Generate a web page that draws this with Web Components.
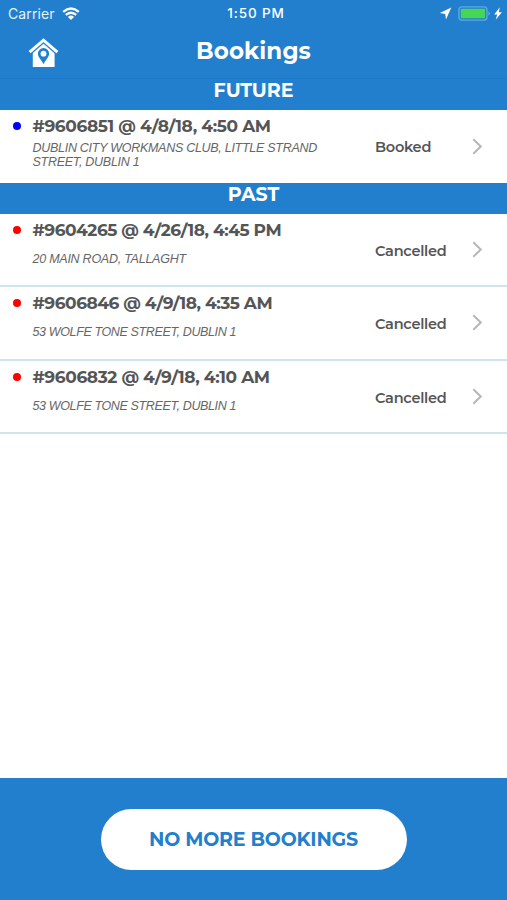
<!DOCTYPE html>
<html lang="en">
<head>
<meta charset="utf-8">
<title>Bookings</title>
<style>
  body {
    margin: 0;
    background: #fff;
    font-family: Montserrat, Inter, 'Liberation Sans', sans-serif;
    --blue: #217fce;
    --line: #cfe3f1;
  }
</style>
</head>
<body>
<bookings-app></bookings-app>
<script>
class BaseElement extends HTMLElement {
  constructor () {
    super()
    this.attachShadow({mode: 'open'})
  }

  connectedCallback () {
    const t = document.createElement('template')
    t.innerHTML = this.template
    this.shadowRoot.replaceChildren(t.content.cloneNode(true))
  }
}

class StatusBar extends BaseElement {
  static get is () { return 'status-bar' }

  get template () {
    return `
      <style>
        :host {
          display: grid;
          grid-template-columns: 1fr auto 1fr;
          align-items: center;
          box-sizing: border-box;
          height: 27px;
          padding: 0 5px 0 8px;
          color: #fff;
          font: 14px/27px Inter, 'Liberation Sans', sans-serif;
        }
        .left, .right {
          display: flex;
          align-items: center;
          height: 27px;
        }
        .left { gap: 7px; color: #e4f2fc; letter-spacing: 0.1px; }
        .right { justify-content: flex-end; }
        .time { font-size: 13.5px; font-weight: 500; letter-spacing: 0.9px; padding-left: 2px; }
        svg { display: block; }
        .arrow { margin-right: 6px; }
        .bolt { margin-left: 3px; }
      </style>
      <div class='left'>
        <span>Carrier</span>
        <svg width='18' height='14' viewBox='0 0 18 14' fill='none' stroke='#fff' stroke-width='2.3'>
          <path d='M1.2 4.8Q9 -1.8 16.8 4.8M3.8 7.9Q9 3.5 14.2 7.9'/>
          <path d='M5.9 9.9Q9 7.2 12.1 9.9L9 13Z' fill='#fff' stroke='none'/>
        </svg>
      </div>
      <div class='time'>1:50 PM</div>
      <div class='right'>
        <svg class='arrow' width='13' height='13' viewBox='0 0 13 13' fill='#fff'>
          <path d='M12.3 .5L.8 6L6.2 7L7 12.4Z'/>
        </svg>
        <svg width='33' height='15' viewBox='0 0 33 15'>
          <rect x='.9' y='.9' width='28' height='13.2' rx='2.8' fill='none' stroke='#5fa9e6' stroke-width='1.4'/>
          <rect x='2.7' y='2.7' width='24.4' height='9.6' rx='.8' fill='#46d653'/>
          <path d='M30.5 5.2Q33.2 7.5 30.5 9.8Z' fill='#69b4ee'/>
        </svg>
        <svg class='bolt' width='8' height='13' viewBox='0 0 8 13' fill='#fff'>
          <path d='M5.8 .3L.2 7.4H3.2L1.7 12.7L7.9 5.2H4.8Z'/>
        </svg>
      </div>
    `
  }
}

class NavBar extends BaseElement {
  static get is () { return 'nav-bar' }

  get template () {
    return `
      <style>
        :host {
          display: grid;
          grid-template-columns: 80px 1fr 80px;
          align-items: center;
          box-sizing: border-box;
          height: 52px;
          padding-bottom: 3px;
          border-bottom: 1px solid #1e7ac8;
          color: #fff;
        }
        .home { margin: 2px 0 0 28px; display: block; }
        .title {
          text-align: center;
          font-size: 23px;
          font-weight: 700;
          letter-spacing: 0.1px;
        }
      </style>
      <svg class='home' width='31' height='31' viewBox='0 0 31 31'>
        <path d='M15.5 4L26.6 14V30H4.8V14Z' fill='#fff'/>
        <path d='M1.6 15.2L15.5 3.2L29.4 15.2' fill='none' stroke='#217fce' stroke-width='5.2'/>
        <path d='M1.6 15.2L15.5 3.2L29.4 15.2' fill='none' stroke='#fff' stroke-width='3'/>
        <path d='M15.5 27.2C13.8 23.4 9.9 20.4 9.9 16.6A5.6 5.5 0 0 1 21.1 16.6C21.1 20.4 17.2 23.4 15.5 27.2Z' fill='#217fce'/>
        <circle cx='15.5' cy='16.7' r='2.9' fill='#fff'/>
      </svg>
      <div class='title'><slot></slot></div>
    `
  }
}

class SectionHeader extends BaseElement {
  static get is () { return 'section-header' }

  get template () {
    return `
      <style>
        :host {
          display: block;
          height: 31px;
          background: var(--blue);
          color: #fff;
          text-align: center;
          font-size: 19px;
          font-weight: 700;
          line-height: 24px;
        }
      </style>
      <slot></slot>
    `
  }
}

class BookingRow extends BaseElement {
  static get is () { return 'booking-row' }

  get template () {
    const dot = this.getAttribute('status') === 'Booked' ? '#00f' : '#f00'
    return `
      <style>
        :host {
          display: grid;
          grid-template-columns: 32.5px 1fr 97px 35px;
          box-sizing: border-box;
          height: 73.3px;
          border-bottom: 2px solid var(--line);
          color: #555;
        }
        .dot {
          width: 8px;
          height: 8px;
          margin: 12px 0 0 12.5px;
          border-radius: 50%;
          background: ${dot};
        }
        .info {
          display: flex;
          flex-direction: column;
        }
        .title {
          height: 31px;
          font-size: 17px;
          font-weight: 700;
          line-height: 32px;
          letter-spacing: var(--track, -0.38px);
          white-space: nowrap;
        }
        .address {
          display: flex;
          align-items: center;
          height: 28px;
          font: italic 12.5px/14px 'Liberation Sans', sans-serif;
          letter-spacing: var(--address-track, -0.37px);
          color: #666;
        }
        .status {
          align-self: center;
          margin-top: var(--status-shift, 3px);
          font-size: 14.5px;
          font-weight: 600;
          letter-spacing: -0.25px;
        }
        .chevron { align-self: center; display: block; }
      </style>
      <div class='dot'></div>
      <div class='info'>
        <div class='title'>${this.getAttribute('title-text')}</div>
        <div class='address'><span><slot></slot></span></div>
      </div>
      <div class='status'>${this.getAttribute('status')}</div>
      <svg class='chevron' width='11' height='17' viewBox='0 0 11 17' fill='none' stroke='#b7b7b7' stroke-width='2'>
        <path d='M1.3 1.2L8.8 8.5L1.3 15.8'/>
      </svg>
    `
  }
}

class BottomBar extends BaseElement {
  static get is () { return 'bottom-bar' }

  get template () {
    return `
      <style>
        :host {
          display: flex;
          justify-content: center;
          align-items: center;
          height: 122px;
          background: var(--blue);
        }
        button {
          width: 306px;
          height: 61px;
          margin: 0;
          padding: 2px 0 0;
          border: 0;
          border-radius: 31px;
          background: #fff;
          color: var(--blue);
          font: 700 19px/24px Montserrat, Inter, sans-serif;
          letter-spacing: -0.2px;
        }
      </style>
      <button><slot></slot></button>
    `
  }
}

class BookingsApp extends BaseElement {
  static get is () { return 'bookings-app' }

  get template () {
    return `
      <style>
        :host {
          display: flex;
          flex-direction: column;
          height: 900px;
          overflow: hidden;
        }
        header { background: var(--blue); }
        main { flex: 1; }
        .first {
          height: 73px;
          border-bottom: 0;
          --track: -0.36px;
          --address-track: -0.28px;
          --status-shift: 0;
        }
        .second {
          --track: -0.46px;
          --address-track: -0.25px;
        }
        .third { --track: -0.45px; }
      </style>
      <header>
        <status-bar></status-bar>
        <nav-bar>Bookings</nav-bar>
      </header>
      <main>
        <section-header>FUTURE</section-header>
        <booking-row class='first' title-text='#9606851 @ 4/8/18, 4:50 AM' status='Booked'>DUBLIN CITY WORKMANS CLUB, LITTLE STRAND<br>STREET, DUBLIN 1</booking-row>
        <section-header>PAST</section-header>
        <booking-row class='second' title-text='#9604265 @ 4/26/18, 4:45 PM' status='Cancelled'>20 MAIN ROAD, TALLAGHT</booking-row>
        <booking-row class='third' title-text='#9606846 @ 4/9/18, 4:35 AM' status='Cancelled'>53 WOLFE TONE STREET, DUBLIN 1</booking-row>
        <booking-row title-text='#9606832 @ 4/9/18, 4:10 AM' status='Cancelled'>53 WOLFE TONE STREET, DUBLIN 1</booking-row>
      </main>
      <bottom-bar>NO MORE BOOKINGS</bottom-bar>
    `
  }
}

for (const el of [StatusBar, NavBar, SectionHeader, BookingRow, BottomBar, BookingsApp]) {
  window.customElements.define(el.is, el)
}
</script>
</body>
</html>
